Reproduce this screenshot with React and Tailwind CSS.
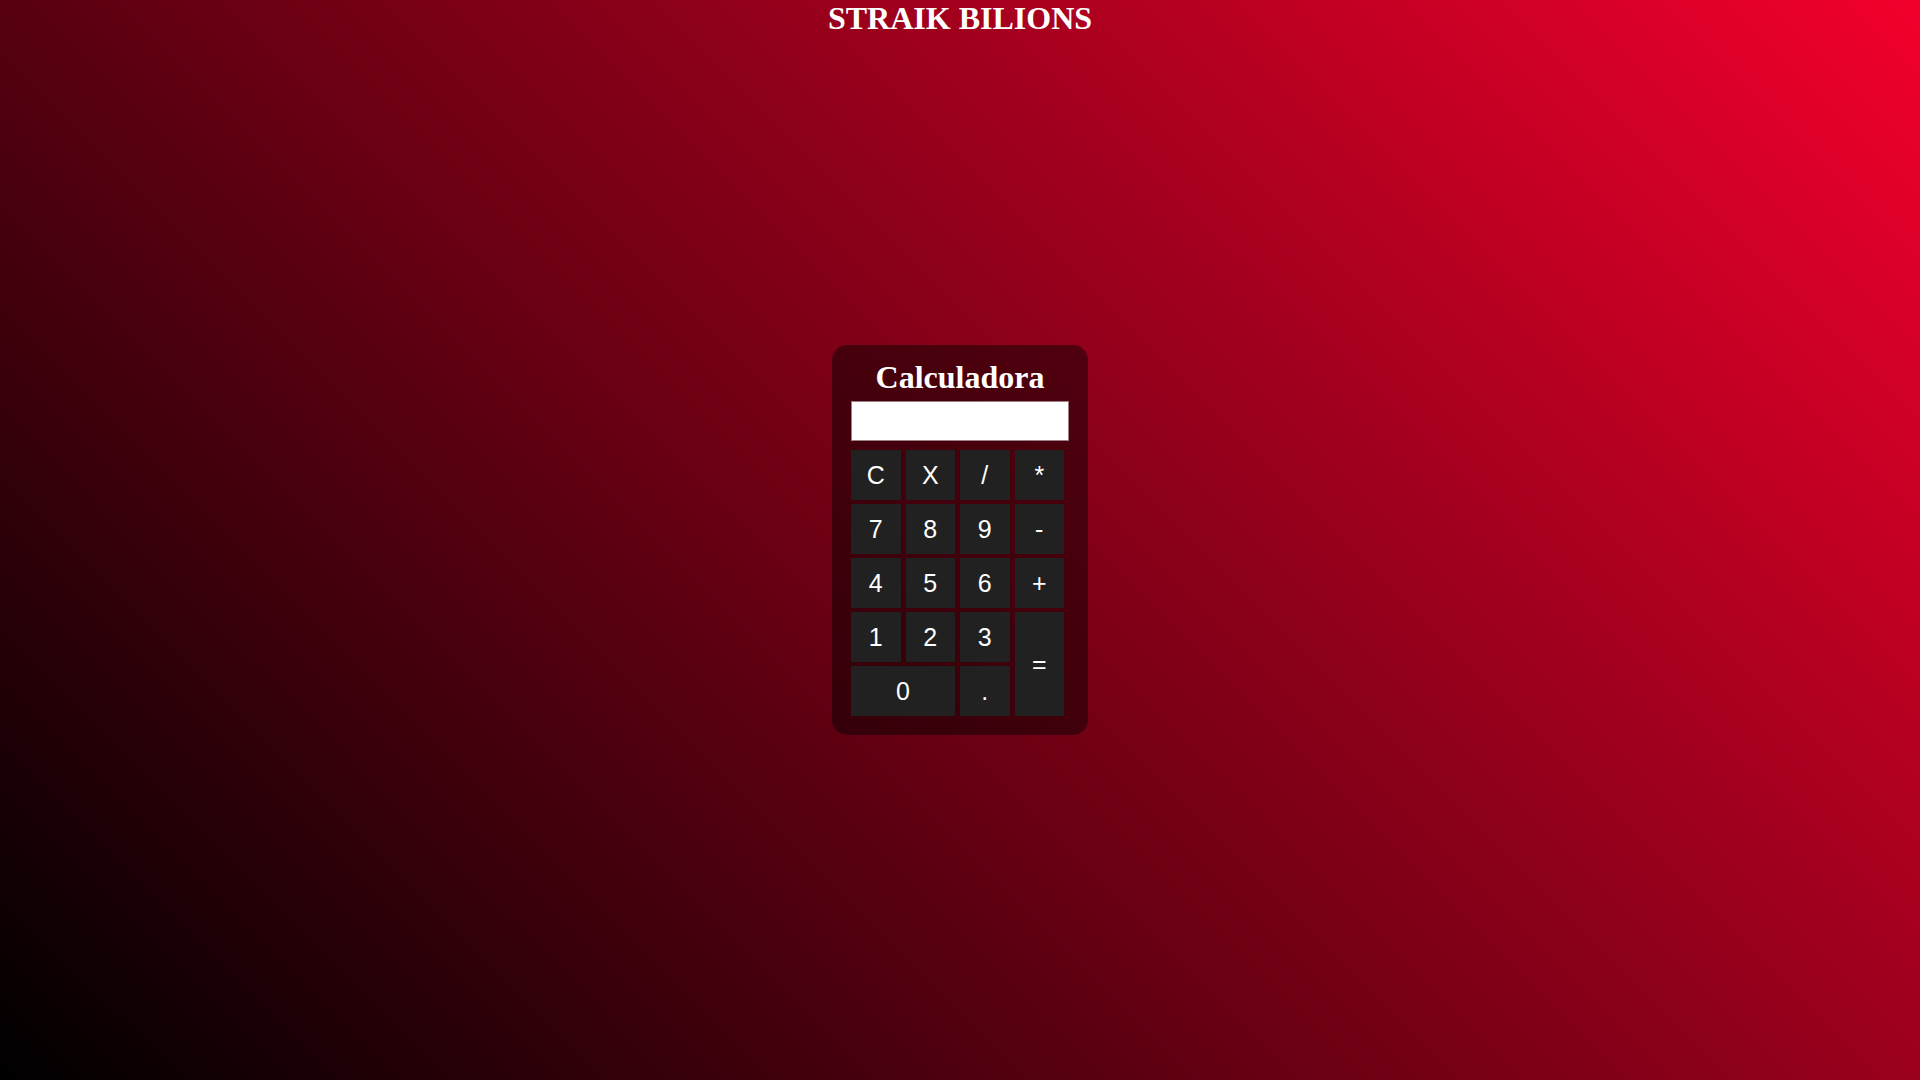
const keys = [
  { label: 'C' },
  { label: 'X' },
  { label: '/' },
  { label: '*' },
  { label: '7' },
  { label: '8' },
  { label: '9' },
  { label: '-' },
  { label: '4' },
  { label: '5' },
  { label: '6' },
  { label: '+' },
  { label: '1' },
  { label: '2' },
  { label: '3' },
  { label: '=', span: 'row-span-2' },
  { label: '0', span: 'col-span-2' },
  { label: '.' },
];

const App = () => {
  return (
    <div className="min-h-screen h-screen flex flex-col bg-[linear-gradient(45deg,#000000,#f2002c)] text-white">
      {/* Title */}
      <h1 className="h-[37px] text-center text-[32px] leading-[37px] font-bold font-['Liberation_Serif',serif]">
        STRAIK BILIONS
      </h1>

      {/* Calculator */}
      <div className="flex-1 flex items-center justify-center">
        <div className="w-[256px] h-[390px] rounded-[15px] bg-black/45 pt-[14px] pl-[19px] pr-[19px]">
          <h2 className="text-center text-[32px] leading-[37px] font-bold font-['Liberation_Serif',serif]">
            Calculadora
          </h2>
          <input
            type="text"
            readOnly
            className="mt-[5px] block w-[218px] h-[40px] bg-white border border-[#9c8088] outline-none"
          />
          <div className="mt-[9px] grid grid-cols-[repeat(4,49.5px)] auto-rows-[50px] gap-x-[5px] gap-y-[4px]">
            {keys.map((k) => (
              <button
                key={k.label}
                className={`${k.span || ''} bg-[#212121] flex items-center justify-center pt-[2px] text-[25px] text-white font-['Liberation_Sans',Arial,sans-serif]`}
              >
                {k.label}
              </button>
            ))}
          </div>
        </div>
      </div>
      <div className="h-[37px]" />
    </div>
  );
};

export default App;
